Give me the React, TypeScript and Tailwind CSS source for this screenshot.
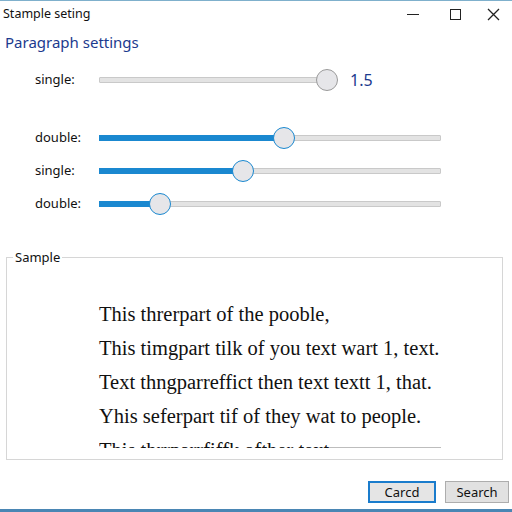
import React from "react";

const ui = { fontFamily: '"Noto Sans", "Open Sans", sans-serif' };
const serif = { fontFamily: '"Liberation Serif", "Times New Roman", serif' };

function Slider({ width, pos, filled }: { width: number; pos: number; filled: boolean }) {
  return (
    <div className="relative h-[22px] flex items-center" style={{ width }}>
      <div className="w-full h-[6px] bg-[#e3e3e3] border border-[#c9c9c9] rounded-[1px]" />
      {filled && (
        <div className="absolute left-0 top-[8px] h-[6px] bg-[#1a88d0]" style={{ width: pos }} />
      )}
      <div
        className={
          "absolute top-0 w-[22px] h-[22px] rounded-full bg-[#e6e6e9] border-[1.5px] " +
          (filled ? "border-[#1a88d0]" : "border-[#9a9a9a]")
        }
        style={{ left: pos - 11 }}
      />
    </div>
  );
}

function Row({ label, children }: { label: string; children: React.ReactNode }) {
  return (
    <div className="flex items-center h-[22px]">
      <div className="w-[64px] text-[13px] text-[#111]" style={ui}>{label}</div>
      {children}
    </div>
  );
}

export default function App() {
  return (
    <div className="w-[512px] h-[512px] bg-white relative flex flex-col border-t border-[#7fb0cc] border-b-[3px] border-b-[#4a86b4] overflow-hidden" style={ui}>
      {/* title bar */}
      <div className="h-[27px] flex items-center pl-[3px] text-[12.5px] text-[#111]">
        <span className="flex-1">Stample seting</span>
        <div className="flex items-center h-full">
          <div className="w-[46px] h-full flex items-center justify-center">
            <div className="w-[12px] h-[1.5px] bg-[#222]" />
          </div>
          <div className="w-[38px] h-full flex items-center justify-center">
            <div className="w-[11px] h-[11px] border-[1.5px] border-[#222]" />
          </div>
          <div className="w-[38px] h-full flex items-center justify-center">
            <svg width="13" height="13" viewBox="0 0 13 13">
              <path d="M1 1 L12 12 M12 1 L1 12" stroke="#222" strokeWidth="1.3" />
            </svg>
          </div>
        </div>
      </div>
      {/* heading */}
      <div className="pl-[5px] text-[15px] leading-[28px] text-[#1c3a8e]">Paragraph settings</div>

      <div className="pl-[35px] mt-[13px]">
        <Row label="single:">
          <Slider width={238} pos={228} filled={false} />
          <span className="ml-[13px] text-[16px] text-[#1c3a8e]">1.5</span>
        </Row>
      </div>

      <div className="pl-[35px] mt-[36px] flex flex-col gap-[11px]">
        <Row label="double:">
          <Slider width={342} pos={185} filled={true} />
        </Row>
        <Row label="single:">
          <Slider width={342} pos={144} filled={true} />
        </Row>
        <Row label="double:">
          <Slider width={342} pos={61} filled={true} />
        </Row>
      </div>

      {/* sample group */}
      <div className="relative ml-[6px] mt-[42px] w-[497px] h-[203px] border border-[#d6d6d6]">
        <span className="absolute left-[6px] top-[-10px] bg-white px-[2px] text-[13px] leading-[18px] text-[#111]">Sample</span>
        <div className="ml-[92px] mt-[39px] w-[342px] text-[20.5px] text-[#111]" style={serif}>
          <div className="h-[34px] leading-[34px] whitespace-nowrap">This threrpart of the pooble,</div>
          <div className="h-[34px] leading-[34px] whitespace-nowrap">This timgpart tilk of you text wart 1, text.</div>
          <div className="h-[34px] leading-[34px] whitespace-nowrap">Text thngparreffict then text textt 1, that.</div>
          <div className="h-[34px] leading-[34px] whitespace-nowrap">Yhis seferpart tif of they wat to people.</div>
          <div className="flex h-[15px] overflow-hidden">
            <div className="leading-[34px] whitespace-nowrap">This thrrparrfiffk ofther text</div>
            <div className="flex-1 h-[15px] border-b border-[#bdbdbd]" />
          </div>
        </div>
      </div>

      {/* buttons */}
      <div className="flex justify-end gap-[9px] pr-[3px] mt-[21px]">
        <button className="w-[68px] h-[22px] bg-[#e5e5e5] border-2 border-[#1a7ccc] text-[13px] text-[#111] leading-none">Carcd</button>
        <button className="w-[64px] h-[22px] bg-[#e1e1e1] border border-[#adadad] text-[13px] text-[#111] leading-none">Search</button>
      </div>
    </div>
  );
}
